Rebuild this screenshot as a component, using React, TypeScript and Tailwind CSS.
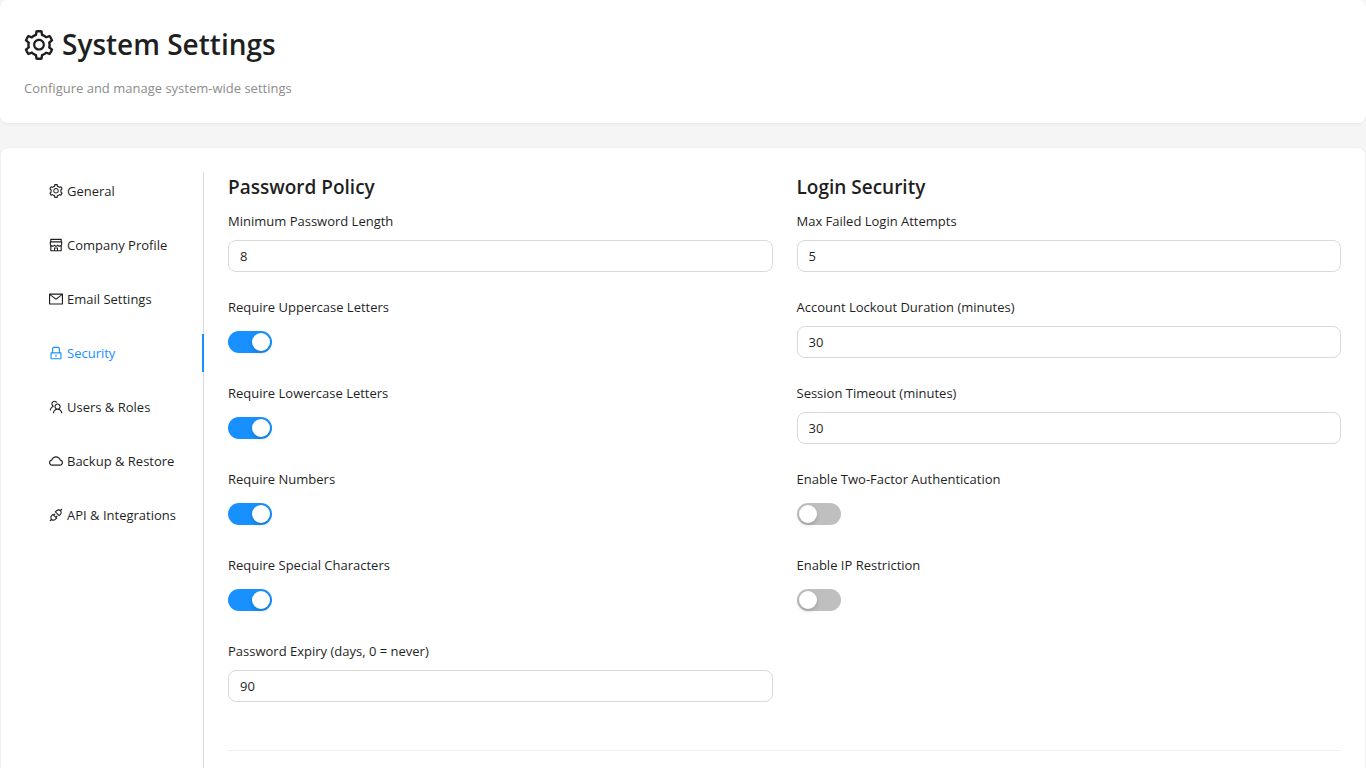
import { useState } from "react";
import type { ReactNode } from "react";
import type { IconType } from "react-icons";
import {
  AiOutlineApi,
  AiOutlineCloud,
  AiOutlineLock,
  AiOutlineMail,
  AiOutlineSetting,
  AiOutlineShop,
  AiOutlineTeam,
} from "react-icons/ai";

// Trims the built-in margin of the Ant icons so the glyph fills its box.
const ICON_BOX = "64 64 896 896";

const tabs: { label: string; icon: IconType }[] = [
  { label: "General", icon: AiOutlineSetting },
  { label: "Company Profile", icon: AiOutlineShop },
  { label: "Email Settings", icon: AiOutlineMail },
  { label: "Security", icon: AiOutlineLock },
  { label: "Users & Roles", icon: AiOutlineTeam },
  { label: "Backup & Restore", icon: AiOutlineCloud },
  { label: "API & Integrations", icon: AiOutlineApi },
];

function NumberField({ id, label, value }: { id: string; label: string; value: string }) {
  return (
    <div className="flex flex-col gap-2">
      <label htmlFor={id} className="self-start leading-[22px]">
        {label}
      </label>
      <input
        id={id}
        type="text"
        inputMode="numeric"
        defaultValue={value}
        className="h-8 w-full rounded-lg border border-[#d9d9d9] bg-white px-[11px] outline-none hover:border-[#1890ff] focus:border-[#1890ff]"
      />
    </div>
  );
}

function SwitchField({ id, label, on = false }: { id: string; label: string; on?: boolean }) {
  return (
    <div className="flex flex-col gap-2">
      <label htmlFor={id} className="self-start leading-[22px]">
        {label}
      </label>
      <div className="flex h-8 items-center">
        <input
          id={id}
          type="checkbox"
          role="switch"
          defaultChecked={on}
          className="flex h-[22px] w-11 cursor-pointer appearance-none items-center rounded-full bg-[#bfbfbf] px-0.5 before:size-[18px] before:rounded-full before:bg-white before:shadow-[0_2px_4px_rgba(0,35,11,0.2)] before:content-[''] checked:justify-end checked:bg-[#1890ff]"
        />
      </div>
    </div>
  );
}

function Section({ title, children }: { title: string; children: ReactNode }) {
  return (
    <section>
      <h2 className="mb-2 text-[19px] font-semibold leading-[30px]">{title}</h2>
      <div className="flex flex-col gap-6">{children}</div>
    </section>
  );
}

export default function App() {
  const [active, setActive] = useState("Security");

  return (
    <div className="flex min-h-screen flex-col gap-6 bg-[#f5f5f5] font-['Segoe_UI','Open_Sans',sans-serif] text-[13px] text-[#1f1f1f]">
      <header className="rounded-lg bg-white p-6 shadow-[0_1px_2px_rgba(0,0,0,0.03),0_1px_6px_-1px_rgba(0,0,0,0.02),0_2px_4px_rgba(0,0,0,0.02)]">
        <h1 className="mb-3 flex items-center gap-2 text-[28px] font-semibold leading-[41px]">
          <AiOutlineSetting viewBox={ICON_BOX} className="size-[30px]" />
          System Settings
        </h1>
        <p className="leading-[22px] text-[#8c8c8c]">Configure and manage system-wide settings</p>
      </header>

      <main className="flex flex-1 rounded-lg border border-[#f0f0f0] bg-white px-6 pt-6 shadow-[0_1px_2px_rgba(0,0,0,0.03),0_1px_6px_-1px_rgba(0,0,0,0.02),0_2px_4px_rgba(0,0,0,0.02)]">
        <nav
          role="tablist"
          aria-orientation="vertical"
          className="flex w-[179px] shrink-0 flex-col gap-4 border-r border-[#d9d9d9]"
        >
          {tabs.map(({ label, icon: Icon }) => (
            <button
              key={label}
              type="button"
              role="tab"
              aria-selected={active === label}
              onClick={() => setActive(label)}
              className="-mr-px flex cursor-pointer items-center gap-1 whitespace-nowrap border-r-2 border-transparent py-2 pl-6 leading-[22px] hover:text-[#40a9ff] aria-selected:border-[#1890ff] aria-selected:text-[#1890ff]"
            >
              <Icon viewBox={ICON_BOX} className="size-3.5 shrink-0" />
              {label}
            </button>
          ))}
        </nav>

        <form className="min-w-0 flex-1 pl-6">
          <div className="grid grid-cols-2 gap-6">
            <Section title="Password Policy">
              <NumberField id="min-length" label="Minimum Password Length" value="8" />
              <SwitchField id="uppercase" label="Require Uppercase Letters" on />
              <SwitchField id="lowercase" label="Require Lowercase Letters" on />
              <SwitchField id="numbers" label="Require Numbers" on />
              <SwitchField id="special" label="Require Special Characters" on />
              <NumberField id="expiry" label="Password Expiry (days, 0 = never)" value="90" />
            </Section>
            <Section title="Login Security">
              <NumberField id="attempts" label="Max Failed Login Attempts" value="5" />
              <NumberField id="lockout" label="Account Lockout Duration (minutes)" value="30" />
              <NumberField id="timeout" label="Session Timeout (minutes)" value="30" />
              <SwitchField id="two-factor" label="Enable Two-Factor Authentication" />
              <SwitchField id="ip" label="Enable IP Restriction" />
            </Section>
          </div>
          <hr className="mt-12 mb-6 border-[#f0f0f0]" />
        </form>
      </main>
    </div>
  );
}
